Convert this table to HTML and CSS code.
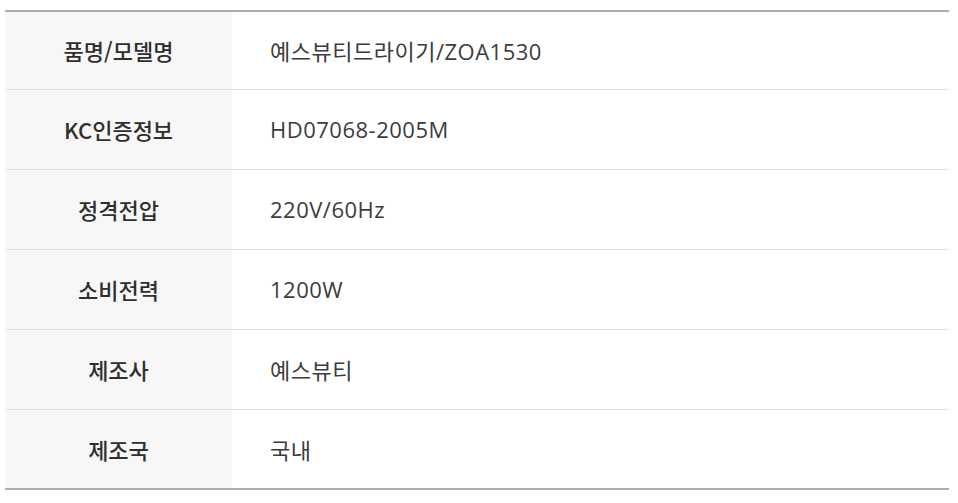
FILE: index.html
```html
<!DOCTYPE html>
<html lang="ko">
<head>
<meta charset="utf-8">
<link rel="stylesheet" href="styles.css">
</head>
<body>
<table class="spec">
  <tbody>
    <tr><th>품명/모델명</th><td>예스뷰티드라이기/ZOA1530</td></tr>
    <tr><th>KC인증정보</th><td>HD07068-2005M</td></tr>
    <tr><th>정격전압</th><td>220V/60Hz</td></tr>
    <tr><th>소비전력</th><td>1200W</td></tr>
    <tr><th>제조사</th><td>예스뷰티</td></tr>
    <tr><th>제조국</th><td>국내</td></tr>
  </tbody>
</table>
</body>
</html>
```
FILE: styles.css
```css
html, body {
  margin: 0;
  padding: 0;
  background: #ffffff;
}
body {
  padding: 10px 9px 0 5px;
  font-family: "Open Sans", "Noto Sans CJK KR", sans-serif;
}
.spec {
  width: 944px;
  border-collapse: collapse;
  border-top: 2px solid #aeaeae;
  border-bottom: 2px solid #aeaeae;
}
.spec tr {
  height: 80px;
}
.spec tr + tr {
  border-top: 1px solid #e2e2e2;
}
.spec tr:first-child {
  height: 78px;
}
.spec th {
  width: 227px;
  padding: 0;
  background: #f7f7f7;
  color: #2f2f2f;
  font-family: "Noto Sans CJK KR", sans-serif;
  font-size: 22px;
  font-weight: 500;
  text-align: center;
  vertical-align: middle;
}
.spec td {
  padding: 0 0 0 38px;
  color: #3c3c3c;
  font-size: 22px;
  font-weight: 400;
  letter-spacing: 0.5px;
  text-align: left;
  vertical-align: middle;
}
```
